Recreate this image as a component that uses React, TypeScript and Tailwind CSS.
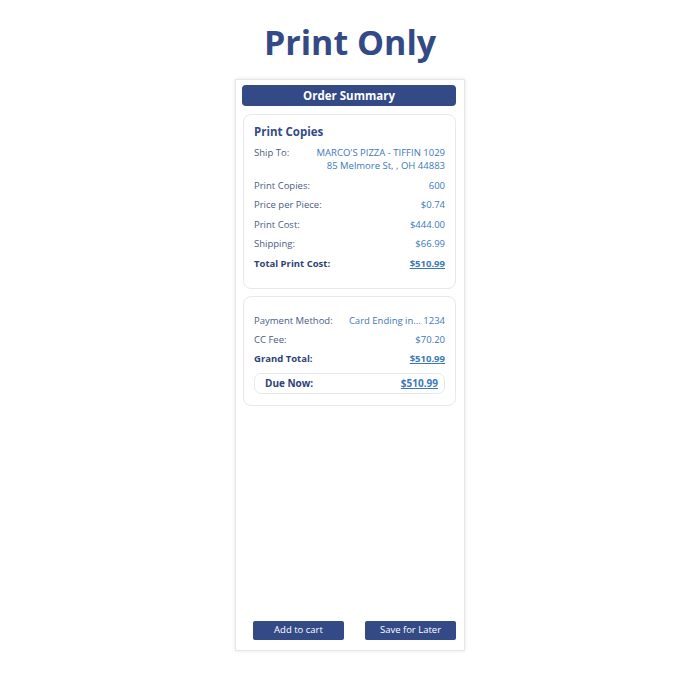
export default function App() {
  const rows1 = [
    { label: "Print Copies:", value: "600" },
    { label: "Price per Piece:", value: "$0.74" },
    { label: "Print Cost:", value: "$444.00" },
    { label: "Shipping:", value: "$66.99" },
  ];

  return (
    <div className="flex min-h-[700px] w-full flex-col items-center bg-white font-['Open_Sans',sans-serif]">
      {/* Title */}
      <h1 className="mt-[20px] text-[34px] font-bold leading-[44px] text-[#344a86]">
        Print Only
      </h1>

      {/* Order panel */}
      <div className="mt-[15px] flex h-[572px] w-[230px] flex-col border border-[#e6e6e6] pl-[6px] pr-[8px] pt-[5px] pb-[10px] shadow-[0_0_4px_rgba(0,0,0,0.1)]">
        <div className="flex h-[21px] items-center justify-center rounded-[4px] bg-[#344a86] text-[11.5px] font-bold text-white">
          Order Summary
        </div>

        {/* Print copies card */}
        <div className="ml-[1px] mt-[8px] rounded-[8px] border border-[#e6e8ee] px-[10px] pt-[9px] pb-[18px]">
          <div className="text-[11.5px] font-bold leading-[16px] text-[#344a86]">
            Print Copies
          </div>
          <div className="mt-[6px] flex flex-col gap-[6.6px] text-[9.5px] leading-[13px]">
            <div className="flex justify-between">
              <span className="text-[#4d5a86]">Ship To:</span>
              <span className="text-right text-[#3b79ba]">
                MARCO'S PIZZA - TIFFIN 1029
                <br />
                85 Melmore St, , OH 44883
              </span>
            </div>
            {rows1.map((r) => (
              <div key={r.label} className="flex justify-between">
                <span className="text-[#4d5a86]">{r.label}</span>
                <span className="text-[#3b79ba]">{r.value}</span>
              </div>
            ))}
            <div className="flex justify-between font-bold">
              <span className="text-[#2f3f78]">Total Print Cost:</span>
              <span className="text-[#3b79ba] underline">$510.99</span>
            </div>
          </div>
        </div>

        {/* Payment card */}
        <div className="ml-[1px] mt-[7px] rounded-[8px] border border-[#e6e8ee] px-[10px] pt-[17px] pb-[11px]">
          <div className="flex flex-col gap-[6px] text-[9.5px] leading-[13px]">
            <div className="flex justify-between">
              <span className="text-[#4d5a86]">Payment Method:</span>
              <span className="text-[#3b79ba]">Card Ending in... 1234</span>
            </div>
            <div className="flex justify-between">
              <span className="text-[#4d5a86]">CC Fee:</span>
              <span className="text-[#3b79ba]">$70.20</span>
            </div>
            <div className="flex justify-between font-bold">
              <span className="text-[#2f3f78]">Grand Total:</span>
              <span className="text-[#3b79ba] underline">$510.99</span>
            </div>
          </div>
          <div className="mt-[8px] flex h-[21px] items-center justify-between rounded-[7px] border border-[#e6e8ee] pl-[10px] pr-[6px] text-[10px] font-bold">
            <span className="text-[#2f3f78]">Due Now:</span>
            <span className="text-[#3b79ba] underline">$510.99</span>
          </div>
        </div>

        {/* Buttons */}
        <div className="mt-auto ml-[11px] flex justify-between">
          <button
            type="button"
            className="h-[19px] w-[91px] rounded-[2px] bg-[#344a86] text-[9.5px] text-white"
          >
            Add to cart
          </button>
          <button
            type="button"
            className="h-[19px] w-[91px] rounded-[2px] bg-[#344a86] text-[9.5px] text-white"
          >
            Save for Later
          </button>
        </div>
      </div>
    </div>
  );
}
